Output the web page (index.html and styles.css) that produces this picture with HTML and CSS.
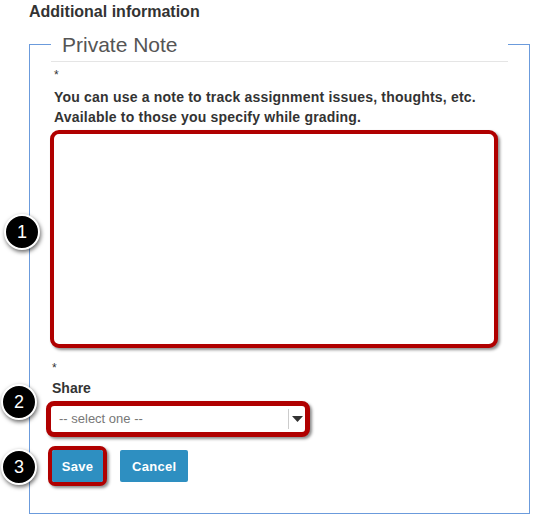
FILE: index.html
```html
<!DOCTYPE html>
<html>
<head>
<meta charset="utf-8">
<link rel="stylesheet" href="styles.css">
</head>
<body>
<div class="page">
  <div class="section-title">Additional information</div>
  <fieldset class="note-fs">
    <legend>Private Note</legend>
    <div class="req">*</div>
    <label class="lbl desc">You can use a note to track assignment issues, thoughts, etc.<br>Available to those you specify while grading.</label>
    <div class="hl hl-note"><textarea class="note"></textarea></div>
    <div class="req req2">*</div>
    <label class="lbl share">Share</label>
    <div class="hl hl-select">
      <div class="select">
        <span class="select-text">-- select one --</span>
        <span class="caret-box"><svg width="11" height="6" viewBox="0 0 11 6"><path d="M0 0H11L5.5 6Z" fill="#333"/></svg></span>
      </div>
    </div>
    <div class="actions">
      <div class="hl hl-btn"><button class="btn btn-save">Save</button></div>
      <button class="btn btn-cancel">Cancel</button>
    </div>
  </fieldset>
  <span class="badge b1">1</span>
  <span class="badge b2">2</span>
  <span class="badge b3">3</span>
</div>
</body>
</html>
```

FILE: styles.css
```css
body {
  margin: 0;
  font-family: "Liberation Sans", Arial, sans-serif;
  font-size: 14px;
  line-height: 20px;
  color: #333;
  background: #fff;
}
.page {
  position: relative;
  width: 540px;
  height: 518px;
  overflow: hidden;
}
.section-title {
  font-weight: bold;
  font-size: 16px;
  line-height: 20px;
  margin: 2px 0 0 29px;
}
.note-fs {
  margin: 4px 0 0 29px;
  width: 501px;
  box-sizing: border-box;
  border: 1px solid #6b9bdc;
  padding: 0 21px 27px;
  min-width: 0;
}
legend {
  width: 100%;
  box-sizing: border-box;
  padding: 7px 11px 4px;
  font-size: 21px;
  line-height: 24px;
  color: #555;
  border-bottom: 1px solid #e5e5e5;
}
.req {
  font-size: 12px;
  line-height: 20px;
  margin-top: 3px;
  padding-left: 3px;
}
.req2 {
  margin-top: 10px;
  padding-left: 1px;
}
.lbl {
  display: block;
  font-weight: bold;
  margin-top: 2px;
}
.desc {
  padding-left: 3px;
  letter-spacing: 0.2px;
}
.share {
  margin-top: 0;
  padding-left: 1px;
}
.hl {
  box-sizing: border-box;
  border: 4px solid #b00000;
  border-radius: 9px;
  box-shadow: 2px 2px 3px rgba(0, 0, 0, 0.45);
  background: #fff;
}
.hl-note {
  margin: 3px 0 0 -1px;
  width: 448px;
  height: 218px;
}
.note {
  display: block;
  width: 100%;
  height: 100%;
  border: 0;
  resize: none;
  background: transparent;
  outline: none;
  padding: 0;
}
.hl-select {
  margin: 3px 0 0 -5px;
  width: 264px;
  height: 36px;
  border-width: 5px;
  border-radius: 8px;
}
.select {
  display: flex;
  align-items: center;
  height: 26px;
  padding-left: 8px;
  font-size: 13px;
  color: #777;
}
.caret-box {
  margin-left: auto;
  width: 16px;
  height: 20px;
  border-left: 1px solid #ccc;
  display: flex;
  align-items: center;
  justify-content: center;
}
.actions {
  display: flex;
  align-items: flex-start;
  gap: 13px;
  margin-top: 9px;
}
.hl-btn {
  margin-left: -3px;
  border-radius: 7px;
}
.btn {
  display: block;
  height: 32px;
  border: 0;
  border-radius: 2px;
  background: #2e8fc1;
  color: #fff;
  font-family: "Liberation Sans", Arial, sans-serif;
  font-weight: bold;
  font-size: 13px;
  letter-spacing: 0.3px;
}
.btn-save {
  width: 51px;
  padding: 0;
}
.btn-cancel {
  margin-top: 4px;
  padding: 0 12px;
}
.badge {
  position: absolute;
  width: 32px;
  height: 32px;
  border: 2px solid #fff;
  border-radius: 50%;
  background: #000;
  color: #fff;
  font-size: 18px;
  line-height: 32px;
  text-align: center;
  box-shadow: 1px 2px 4px rgba(0, 0, 0, 0.6);
}
.b1 { left: 4px; top: 214px; }
.b2 { left: 1px; top: 384px; }
.b3 { left: 1px; top: 449px; }
```
